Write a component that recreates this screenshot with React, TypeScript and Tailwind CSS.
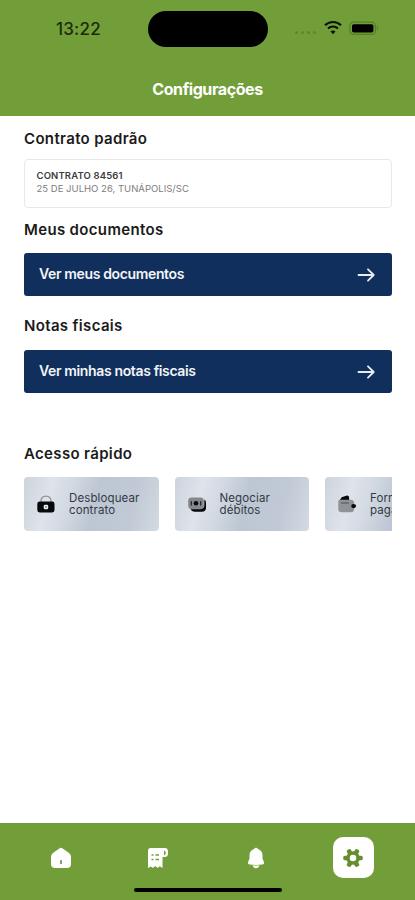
import React from 'react';

const StatusBar = () => (
  <div className="relative h-[58px]">
    <span className="absolute left-[56px] top-[18px] text-[17px] leading-[22px] font-medium tracking-[0.2px] text-[#1c2b0b]">13:22</span>
    <div className="absolute left-[148px] top-[11px] w-[120px] h-[36px] rounded-full bg-black" />
    <div className="absolute left-[295px] top-[20px] flex items-center">
      <div className="flex gap-[3px] mt-[9px]">
        {[1, 2, 3, 4].map((dot) => (
          <span key={dot} className="w-[3px] h-[3px] rounded-full bg-[#5f8730]" />
        ))}
      </div>
      <svg className="ml-[8px] w-[18px] h-[15px]" viewBox="0 0 18 15" fill="none" stroke="#0b1203" strokeWidth="2.1">
        <path d="M1 5.3C5.5 .8 12.5 .8 17 5.3" />
        <path d="M4 8.6C6.8 5.8 11.2 5.8 14 8.6" />
        <path d="M9 14.2 6.5 11.5C7.9 10.1 10.1 10.1 11.5 11.5Z" fill="#0b1203" stroke="none" />
      </svg>
      <svg className="ml-[7px] w-[30px] h-[14px]" viewBox="0 0 30 14">
        <rect x=".8" y="1.2" width="25.6" height="12.2" rx="3.8" fill="none" stroke="#577d29" strokeWidth="1.2" />
        <rect x="3" y="3.2" width="21.4" height="8.4" rx="1.8" fill="#000" />
        <path d="M27.8 5.2v4.2c1.7-.6 1.7-3.6 0-4.2Z" fill="#577d29" />
      </svg>
    </div>
  </div>
);

const ArrowIcon = () => (
  <svg className="w-[18px] h-[16px]" viewBox="0 0 18 16" fill="none" stroke="#e8edf5" strokeWidth="1.8" strokeLinecap="round" strokeLinejoin="round">
    <path d="M1.5 8h15M11 2.3 16.7 8 11 13.7" />
  </svg>
);

const LockIcon = () => (
  <svg className="w-[20px] h-[20px]" viewBox="0 0 20 20">
    <path d="M4.8 8C5 4 7 2.200 10 2.200S15 4 15.200 8" fill="none" stroke="#8c9597" strokeWidth="1.300" />
    <rect x="1.300" y="7.600" width="17.200" height="10.800" rx="2.300" fill="#08090b" />
    <rect x="7.700" y="10.700" width="4.500" height="4.500" rx="1.300" fill="#e4e8ee" />
    <rect x="9.300" y="12.300" width="1.300" height="1.300" fill="#555" />
  </svg>
);

const MoneyIcon = () => (
  <svg className="w-[20px] h-[20px]" viewBox="0 0 20 20">
    <path d="M3.500 14.500h10.500q3.300 0 3.300-3.300V5.500q1.700.8 1.700 3v5.200q0 4-4 4H8q-3.500 0-4.500-3.200Z" fill="#08090b" />
    <rect x="1.200" y="3.400" width="15.600" height="11.800" rx="3.400" fill="#85888c" />
    <circle cx="9" cy="9.300" r="2.300" fill="#08090b" />
    <path d="M4.300 7.200v4.200M13.700 7.200v4.200" stroke="#222" strokeWidth="1.200" />
  </svg>
);

const WalletIcon = () => (
  <svg className="w-[20px] h-[20px]" viewBox="0 0 20 20">
    <path d="M2.500 6.500 4.500 3.600q.6-.8 1.600-.9L10 1.500q1.800-.2 2 1.500l.3 3.500Z" fill="#08090b" />
    <path d="M1.300 7q0-1.200 1.500-1.200H14q3 0 3.200 3.500v5.500q-.2 3.500-3.500 3.500H4.500q-3.200 0-3.200-3.300Z" fill="#909397" />
    <path d="M4 9h8" stroke="#555b60" strokeWidth="1.100" />
    <path d="M16.500 10q2.600 0 2.600 2.100t-2.600 2.100q-2.300-.2-2.300-2.100t2.300-2.100Z" fill="#08090b" />
  </svg>
);

const HomeIcon = () => (
  <svg className="w-[22px] h-[22px]" viewBox="0 0 22 22">
    <path d="M9.300 1.500q1.700-1.300 3.400 0l6.300 4.400q2 1.500 2 3.900v7.300q0 4-4 4H5q-4 0-4-4V9.800q0-2.400 2-3.900Z" fill="#fff" />
    <path d="M11 13.700v2.700" stroke="#587a35" strokeWidth="1.500" strokeLinecap="round" />
  </svg>
);

const ReceiptIcon = () => (
  <svg className="w-[22px] h-[22px]" viewBox="0 0 22 22">
    <path d="M3.500 1H18q3 0 3 3.500v2Q21 10 17.500 10H15.500v11l-2.700-1.700L10.700 21l-2.400-2L6 21l-2.300-1.600L1 21V4q0-3 2.500-3Z" fill="#fff" />
    <path d="M17 3.500q1.800.2 1.800 2.200T17 8.200Z" fill="#729e39" />
    <path d="M4.500 8h2M8.500 8H12M4.500 12.500h2M8.500 12.500H12" stroke="#729e39" strokeWidth="1.500" />
  </svg>
);

const BellIcon = () => (
  <svg className="w-[18px] h-[22px]" viewBox="0 0 18 22">
    <path d="M9 .7q1.700 0 1.900 1.300Q15.300 3.500 15.500 8v3.500l1.300 3.200q.9 2.500-1.400 2.900-6.400.6-12.800 0-2.300-.4-1.400-2.900l1.300-3.200V8Q2.700 3.500 7.100 2 7.300.7 9 .7Z" fill="#fff" />
    <path d="M5.500 18.300q3.500.4 7 0Q11.500 21.300 9 21.300T5.500 18.300Z" fill="#fff" />
  </svg>
);

const GearIcon = () => (
  <svg className="w-[20px] h-[20px]" viewBox="0 0 20 20" fill="#668e2f">
    {[30, 90, 150, 210, 270, 330].map((angle) => (
      <rect key={angle} x="7.700" y=".3" width="4.600" height="5.500" rx="1.500" transform={`rotate(${angle} 10 10)`} />
    ))}
    <circle cx="10" cy="10" r="5" fill="none" stroke="#668e2f" strokeWidth="3.500" />
  </svg>
);

const quickLinks = [
  { icon: <LockIcon />, lines: ['Desbloquear', 'contrato'] },
  { icon: <MoneyIcon />, lines: ['Negociar', 'débitos'] },
  { icon: <WalletIcon />, lines: ['Formas de', 'pagamento'] },
];

const SectionTitle = ({ children }: { children: React.ReactNode }) => (
  <h2 className="text-[15px] leading-[20px] font-semibold tracking-[0.34px] text-[#1b1b1b]">{children}</h2>
);

const ActionButton = ({ label }: { label: string }) => (
  <button className="flex items-center justify-between w-full h-[43px] pl-[15px] pr-[17px] rounded-[3px] bg-[#112f5c] text-[#f2f4f8] text-[14px] tracking-[-0.36px] font-semibold">
    <span className="-mt-[2px]">{label}</span>
    <ArrowIcon />
  </button>
);

const App = () => {
  return (
    <div className="flex flex-col w-full h-[900px] overflow-hidden bg-white font-['Inter',sans-serif]">
      <header className="h-[116px] shrink-0 bg-[#729e39]">
        <StatusBar />
        <h1 className="pt-[20px] text-center text-[16px] leading-[22px] font-bold tracking-[-0.42px] text-white">Configurações</h1>
      </header>

      <main className="flex-1 pl-[24px] pr-[23px] pt-[13px]">
        <SectionTitle>Contrato padrão</SectionTitle>
        <div className="mt-[10px] h-[49px] pl-[11.500px] pt-[9px] border border-[#e8e8e8] rounded-[4px]">
          <p className="text-[9.5px] leading-[13px] font-semibold tracking-[0.14px] text-[#3c3c3c]">CONTRATO 84561</p>
          <p className="text-[9.5px] leading-[14px] tracking-[0.02px] text-[#7d7d7d]">25 DE JULHO 26, TUNÁPOLIS/SC</p>
        </div>

        <div className="mt-[12px] mb-[13px]">
          <SectionTitle>Meus documentos</SectionTitle>
        </div>
        <ActionButton label="Ver meus documentos" />

        <div className="mt-[20px] mb-[14px]">
          <SectionTitle>Notas fiscais</SectionTitle>
        </div>
        <ActionButton label="Ver minhas notas fiscais" />

        <div className="mt-[51px] mb-[13px]">
          <SectionTitle>Acesso rápido</SectionTitle>
        </div>
        <div className="flex gap-[16px] overflow-hidden">
          {quickLinks.map((link) => (
            <div
              key={link.lines[0]}
              className="flex items-center shrink-0 w-[134.500px] h-[54px] pl-[12px] rounded-[4px] bg-[linear-gradient(105deg,#cdd4dd_0%,#dfe3ea_20%,#d2d9e2_34%,#bdc6d3_52%,#c0c9d5_78%,#d3dae2_100%)]"
            >
              {link.icon}
              <p className="ml-[13px] text-[11.500px] leading-[12px] tracking-[0.120px] text-[#343a42] whitespace-nowrap">
                {link.lines[0]}
                <br />
                {link.lines[1]}
              </p>
            </div>
          ))}
        </div>
      </main>

      <nav className="relative flex justify-between h-[77px] shrink-0 pl-[40px] pr-[41px] pt-[14px] bg-[#729e39]">
        <button className="flex items-center justify-center w-[41px] h-[41px]"><HomeIcon /></button>
        <button className="flex items-center justify-center w-[41px] h-[41px]"><ReceiptIcon /></button>
        <button className="flex items-center justify-center w-[41px] h-[41px]"><BellIcon /></button>
        <button className="flex items-center justify-center w-[41px] h-[41px] rounded-[10px] bg-white"><GearIcon /></button>
        <div className="absolute left-[134px] bottom-[8px] w-[148px] h-[4px] rounded-full bg-black" />
      </nav>
    </div>
  );
};

export default App;
